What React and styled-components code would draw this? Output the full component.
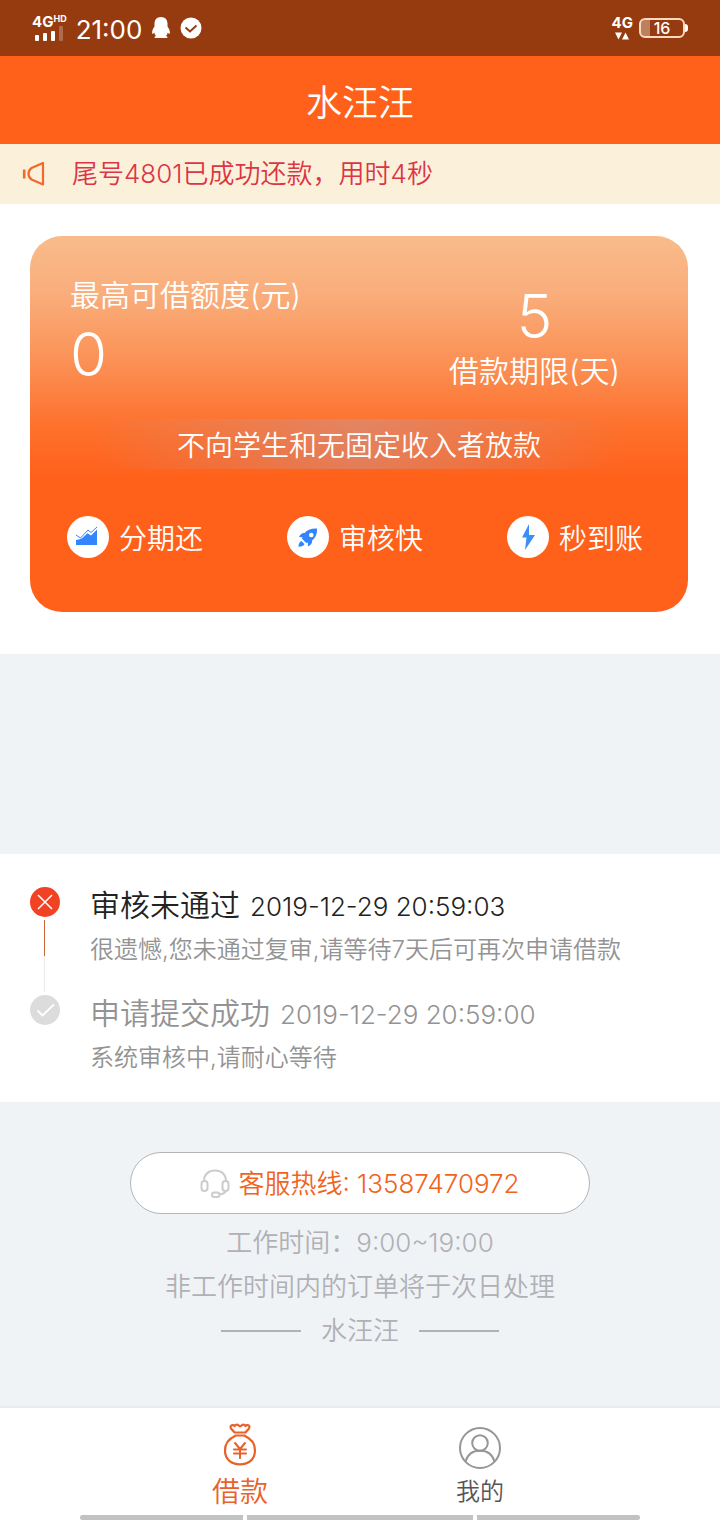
import React from 'react';
import styled, { createGlobalStyle } from 'styled-components';

const GlobalStyle = createGlobalStyle`
*{
  box-sizing:border-box;
}
body{
  margin:0;
  background:#f0f3f6;
  font-family:Inter, "Noto Sans CJK SC", sans-serif;
  font-weight:350;
}
h1,h2,p,ol,ul{
  margin:0;
  padding:0;
  font-weight:350;
  list-style:none;
}
`;

const features = [
  { id: 'stage', label: '分期还', Icon: ChartIcon },
  { id: 'review', label: '审核快', Icon: RocketIcon },
  { id: 'arrive', label: '秒到账', Icon: BoltIcon },
];

const steps = [
  {
    id: 1,
    title: '审核未通过',
    time: '2019-12-29 20:59:03',
    text: '很遗憾,您未通过复审,请等待7天后可再次申请借款',
    active: true,
  },
  {
    id: 2,
    title: '申请提交成功',
    time: '2019-12-29 20:59:00',
    text: '系统审核中,请耐心等待',
    active: false,
  },
];

// icons
function QQIcon() {
  return (
    <svg width="20" height="24" viewBox="0 0 20 24" fill="#fff" aria-hidden="true">
      <path d="M10 1C6 1 3.500 3.800 3.500 7.600v3C2.100 12.500 1 14.800 1.100 16.900c0 1 .7 1.100 1.300.5l.8-.9c.3 1.400.9 2.500 1.800 3.400-1 .3-1.500.8-1.500 1.400 0 .5.500.7 1.200.7h10.600c.7 0 1.200-.2 1.200-.7 0-.6-.5-1.100-1.500-1.400.9-.9 1.500-2 1.800-3.400l.8.9c.6.600 1.300.5 1.300-.5.100-2.100-1-4.400-2.400-6.300v-3C16.500 3.800 14 1 10 1z" />
    </svg>
  );
}

function StatusCheckIcon() {
  return (
    <svg width="22" height="22" viewBox="0 0 22 22" aria-hidden="true">
      <circle cx="11" cy="11" r="10.500" fill="#fff" />
      <path d="M5.500 10.500l4.500 4 6.500-6" fill="none" stroke="#963a10" strokeWidth="2" />
    </svg>
  );
}

function SignalBars() {
  return (
    <svg width="32" height="18" viewBox="0 0 32 18" fill="#fff" aria-hidden="true">
      <rect x="3" y="12" width="4" height="6" rx="1" />
      <rect x="11" y="10" width="4" height="8" rx="1" />
      <rect x="19" y="8" width="4" height="10" rx="1" />
      <rect x="27" y="3" width="4" height="15" rx="1" opacity=".25" />
    </svg>
  );
}

function DataArrows() {
  return (
    <svg width="16" height="8" viewBox="0 0 16 8" fill="#fff" aria-hidden="true">
      <path d="M1 .5h7l-3.500 7zM8 7.500h7l-3.500-7z" />
    </svg>
  );
}

function HornIcon() {
  return (
    <svg width="24" height="26" viewBox="0 0 24 26" fill="none" stroke="#f2692c" strokeWidth="2.200" strokeLinejoin="round" aria-hidden="true">
      <path d="M21 2v21.500L9.500 18.500C5.500 15.500 5.500 10 9.500 7z" />
      <path d="M2.200 8.500v9" strokeWidth="2.600" />
    </svg>
  );
}

function ChartIcon() {
  return (
    <svg width="42" height="42" viewBox="0 0 42 42" aria-hidden="true">
      <path d="M9 29v-5l3.500-.8 2.500-1 5.500-5 3.500 2.300 6-6V29z" fill="#3385ff" />
      <path d="M9 19l4.500 3 7.500-8 3 2.500 6-5.500" fill="none" stroke="#3385ff" strokeWidth="1" />
    </svg>
  );
}

function RocketIcon() {
  return (
    <svg width="42" height="42" viewBox="0 0 42 42" fill="#3385ff" aria-hidden="true">
      <path fillRule="evenodd" d="M30 12.500c-6-.3-9.500 1.200-12.500 4.500-2.500-.2-4 1-5.500 4l3.600.2-.6 1.600 4.200 4.200 1.700-.6.100 4c3-1.500 4.300-3.200 4.100-6 3.800-3 5.200-6.500 4.900-11.900zM24.300 21.300a2.300 2.300 0 1 1 0-4.600 2.300 2.300 0 0 1 0 4.600z" />
      <path d="M14.500 25l3 3c-.8 2-3 2.800-6 2.700.1-2.700.9-4.900 3-5.700z" />
    </svg>
  );
}

function BoltIcon() {
  return (
    <svg width="42" height="42" viewBox="0 0 42 42" fill="#3b8ff5" aria-hidden="true">
      <path d="M22 8l-7 13.500h4.500L18 34l10-15h-6z" />
    </svg>
  );
}

function StepIcon({ active }) {
  return (
    <svg width="30" height="30" viewBox="0 0 30 30" fill="none" stroke="#fff" aria-hidden="true">
      <circle cx="15" cy="15" r="15" fill={active ? '#f14224' : '#dcdcdc'} stroke="none" />
      {active ? (
        <path d="M8 8l14 14M22 8L8 22" strokeWidth="1.500" />
      ) : (
        <path d="M7.500 15.500l5 5L24 9.500" strokeWidth="1.800" />
      )}
    </svg>
  );
}

function HeadsetIcon() {
  return (
    <svg width="30" height="30" viewBox="0 0 30 30" fill="none" stroke="#ccc" strokeWidth="2" aria-hidden="true">
      <path d="M4 12C4 5 9 1.500 15 1.500S26 5 26 12" />
      <rect x="1.500" y="12" width="6" height="10" rx="3" />
      <rect x="22.500" y="12" width="6" height="10" rx="3" />
      <path d="M26 22c-1 2-3.500 3.200-7 3.500" />
      <rect x="12" y="23.500" width="7.500" height="4.500" rx="2.200" />
    </svg>
  );
}

function MoneyBagIcon() {
  return (
    <svg width="36" height="48" viewBox="0 -2 36 48" fill="none" stroke="#e9622a" strokeWidth="2.200" strokeLinejoin="round" strokeLinecap="round" aria-hidden="true">
      <path d="M12.500 9.500C11.500 7.500 8 6 8.500 3.500c.4-1.600 3.100-1.900 4.200-.5 1-1.700 3.400-1.700 4.300-.2.600.6 1.600.6 2.200 0 1-1.500 3.300-1.500 4.200.2 1.200-1.400 3.800-1.100 4.100.5.400 2.500-2.900 4-3.900 6z" />
      <path d="M13.500 12.500h9" />
      <path d="M13 13C7.500 15.500 3 20.500 3 27.500 3 36 9 41.300 18 41.300s15-5.300 15-13.800C33 20.500 28.500 15.500 23 13" />
      <path d="M13 20l5 6 5-6M18 26v9M12 26.500h12M12 30.500h12" strokeWidth="2" />
    </svg>
  );
}

function UserIcon() {
  return (
    <svg width="44" height="48" viewBox="0 0 44 48" fill="none" stroke="#969696" strokeWidth="2" aria-hidden="true">
      <circle cx="22" cy="27" r="20" />
      <circle cx="22" cy="22" r="7.800" />
      <path d="M7.500 40.500C9.500 33.500 15 29.800 22 29.800s12.500 3.700 14.500 10.700" />
    </svg>
  );
}

const App = () => {
  return (
    <Page>
      <GlobalStyle />
      <StatusBar>
        <Group $gap={9}>
          <Network>
            <NetworkName>4G<sup>HD</sup></NetworkName>
            <SignalBars />
          </Network>
          <Clock>21:00</Clock>
          <QQIcon />
          <StatusCheckIcon />
        </Group>
        <Group $gap={6}>
          <DataNetwork>
            <NetworkName>4G</NetworkName>
            <DataArrows />
          </DataNetwork>
          <Battery>16</Battery>
        </Group>
      </StatusBar>

      <Header>
        <h1>水汪汪</h1>
      </Header>

      <Notice>
        <HornIcon />
        <p>尾号4801已成功还款，用时4秒</p>
      </Notice>

      <CardSection>
        <Card>
          <CardTop>
            <div>
              <Label>最高可借额度(元)</Label>
              <Amount>0</Amount>
            </div>
            <Term>
              <Days>5</Days>
              <Label>借款期限(天)</Label>
            </Term>
          </CardTop>
          <Band>不向学生和无固定收入者放款</Band>
          <Features>
            {features.map(({ id, label, Icon }) => (
              <Feature key={id}>
                <Badge><Icon /></Badge>
                <span>{label}</span>
              </Feature>
            ))}
          </Features>
        </Card>
      </CardSection>

      <Timeline>
        {steps.map((step) => (
          <Step key={step.id}>
            <Marker>
              <StepIcon active={step.active} />
              {step.active && <Line />}
            </Marker>
            <StepBody $active={step.active}>
              <StepHead $active={step.active}>
                <h2>{step.title}</h2>
                <time>{step.time}</time>
              </StepHead>
              <StepText>{step.text}</StepText>
            </StepBody>
          </Step>
        ))}
      </Timeline>

      <Footer>
        <Hotline href="tel:13587470972">
          <HeadsetIcon />
          <span>客服热线: 13587470972</span>
        </Hotline>
        <p>工作时间：9:00~19:00</p>
        <p>非工作时间内的订单将于次日处理</p>
        <Brand>水汪汪</Brand>
      </Footer>

      <TabBar>
        <Tab type="button" $active>
          <MoneyBagIcon />
          借款
        </Tab>
        <Tab type="button">
          <UserIcon />
          我的
        </Tab>
      </TabBar>
      <Gesture>
        <Bar $grow={163} />
        <Bar $grow={226} />
        <Bar $grow={163} />
      </Gesture>
    </Page>
  );
};

const Page = styled.main`
  min-height:100vh;
  display:flex;
  flex-direction:column;
  background:#f0f3f6;
`;

const StatusBar = styled.div`
  height:56px;
  padding:0 32px;
  display:flex;
  justify-content:space-between;
  align-items:center;
  background:#963a10;
  color:#fff;
`;

const Group = styled.div`
  display:flex;
  align-items:center;
  gap:${(props) => props.$gap}px;
`;

const Network = styled.div`
  display:flex;
  flex-direction:column;
  svg{
    margin-top:-6px;
  }
`;

const DataNetwork = styled(Network)`
  align-items:center;
  svg{
    margin-top:2px;
  }
`;

const NetworkName = styled.span`
  height:14px;
  font-size:15px;
  line-height:14px;
  font-weight:700;
  sup{
    font-size:9px;
    line-height:8px;
    vertical-align:top;
  }
`;

const Clock = styled.span`
  margin-top:4px;
  font-size:26px;
  line-height:32px;
  font-weight:400;
`;

const Battery = styled.div`
  position:relative;
  width:46px;
  height:20px;
  margin-right:3px;
  border:2px solid #fbd9c0;
  border-radius:6px;
  font-size:16px;
  line-height:16px;
  font-weight:500;
  text-align:center;
  background:linear-gradient(90deg, #bd805f 9px, transparent 9px);
  &::after{
    content:'';
    position:absolute;
    right:-5px;
    top:4px;
    width:3px;
    height:8px;
    border-radius:0 3px 3px 0;
    background:#fff;
  }
`;

const Header = styled.header`
  height:88px;
  padding-top:6px;
  display:flex;
  justify-content:center;
  align-items:center;
  background:#ff611a;
  color:#fff;
  h1{
    font-size:36px;
    line-height:48px;
  }
`;

const Notice = styled.div`
  height:60px;
  padding:0 22px;
  display:flex;
  align-items:center;
  gap:26px;
  background:#fbf1db;
  color:#dc3545;
  font-size:26px;
  line-height:36px;
`;

const CardSection = styled.section`
  padding:32px 32px 42px 30px;
  background:#fff;
`;

const Card = styled.div`
  padding:38px 0 54px;
  border-radius:32px;
  background:linear-gradient(180deg, #f9bb8b 0%, #f9ae7c 15%, #fb9054 34%, #fd722e 50%, #ff611a 64%);
  color:#fff;
`;

const CardTop = styled.div`
  padding:0 68px 0 40px;
  display:flex;
  justify-content:space-between;
  align-items:flex-end;
`;

const Label = styled.p`
  font-size:30px;
  line-height:42px;
`;

const Amount = styled.p`
  font-size:60px;
  line-height:76px;
`;

const Term = styled.div`
  text-align:center;
`;

const Days = styled.p`
  font-size:60px;
  line-height:68px;
`;

const Band = styled.p`
  margin-top:27px;
  padding-top:4px;
  font-size:28px;
  line-height:46px;
  text-align:center;
  background:linear-gradient(90deg, transparent 10%, rgba(200,150,150,.5) 50%, transparent 90%);
`;

const Features = styled.ul`
  margin-top:47px;
  padding:0 45px 0 37px;
  display:flex;
  justify-content:space-between;
`;

const Feature = styled.li`
  display:flex;
  align-items:center;
  gap:10px;
  font-size:28px;
  line-height:38px;
  span:last-child{
    padding-top:4px;
  }
`;

const Badge = styled.span`
  width:42px;
  height:42px;
  border-radius:50%;
  background:#fff;
  svg{
    display:block;
  }
`;

const Timeline = styled.ol`
  margin-top:200px;
  padding:30px 30px 22px;
  background:#fff;
`;

const Step = styled.li`
  display:flex;
  gap:30px;
`;

const Marker = styled.div`
  padding-top:3px;
  display:flex;
  flex-direction:column;
  align-items:center;
  gap:3px;
`;

const Line = styled.span`
  flex:1;
  width:2px;
  border-left:1px solid;
  border-image:linear-gradient(180deg, #cf6436 50%, #ebebeb 50%) 1;
`;

const StepBody = styled.div`
  padding-bottom:${(props) => (props.$active ? '20px' : '0')};
`;

const StepHead = styled.div`
  height:44px;
  display:flex;
  align-items:baseline;
  gap:10px;
  color:${(props) => (props.$active ? '#222' : '#939393')};
  line-height:42px;
  h2{
    font-size:30px;
  }
  time{
    font-size:26px;
  }
`;

const StepText = styled.p`
  color:#939393;
  font-size:24px;
  line-height:44px;
`;

const Footer = styled.footer`
  flex:1;
  padding:50px 20px 53px;
  display:flex;
  flex-direction:column;
  align-items:center;
  color:#b0b0b5;
  font-size:26px;
  line-height:44px;
`;

const Hotline = styled.a`
  width:460px;
  max-width:100%;
  height:62px;
  margin-bottom:7px;
  padding-top:2px;
  display:flex;
  justify-content:center;
  align-items:center;
  gap:8px;
  border:1px solid #b4b4b4;
  border-radius:31px;
  background:#fff;
  color:#f0641e;
  text-decoration:none;
`;

const Brand = styled.p`
  display:flex;
  align-items:center;
  gap:20px;
  &::before,
  &::after{
    content:'';
    width:80px;
    height:2px;
    background:#b0b2b6;
  }
`;

const TabBar = styled.nav`
  padding-top:13px;
  display:flex;
  justify-content:center;
  border-top:2px solid #e8ebee;
  background:#fff;
`;

const Tab = styled.button`
  width:calc(100% / 3);
  padding:0;
  display:flex;
  flex-direction:column;
  align-items:center;
  gap:4px;
  border:0;
  background:none;
  font-family:inherit;
  font-weight:350;
  font-size:${(props) => (props.$active ? '28px' : '24px')};
  line-height:38px;
  color:${(props) => (props.$active ? '#e9622a' : '#555')};
  cursor:pointer;
`;

const Gesture = styled.div`
  padding:4px 80px 0;
  display:flex;
  gap:4px;
  background:#fff;
`;

const Bar = styled.span`
  flex:${(props) => props.$grow} 1 0;
  height:5px;
  background:#c2c2c2;
  &:first-child{
    border-radius:3px 0 0 3px;
  }
  &:last-child{
    border-radius:0 3px 3px 0;
  }
`;

export default App;
